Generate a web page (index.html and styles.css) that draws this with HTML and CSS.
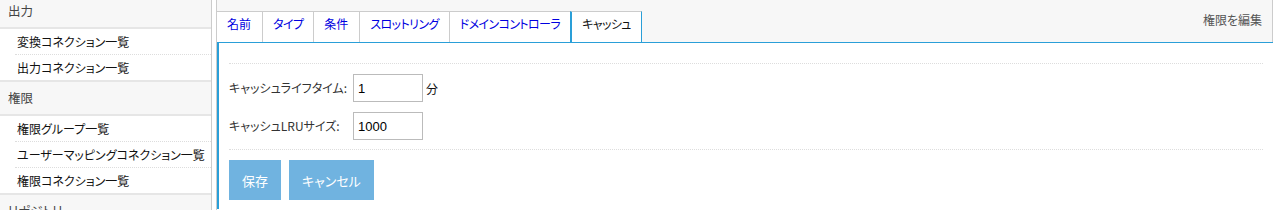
FILE: index.html
```html
<!DOCTYPE html>
<html lang="ja">
<head>
  <meta charset="UTF-8" />
  <title>権限コネクション - キャッシュ</title>
  <link rel="stylesheet" href="styles.css">
</head>
<body>

  <div class="layout">
    <!-- Navigation -->
    <nav class="sidebar">
      <div class="nav-group">
        <div class="nav-head">出力</div>
        <ul class="nav-list">
          <li>変換コネクション一覧</li>
          <li>出力コネクション一覧</li>
        </ul>
      </div>
      <div class="nav-group">
        <div class="nav-head">権限</div>
        <ul class="nav-list">
          <li>権限グループ一覧</li>
          <li>ユーザーマッピングコネクション一覧</li>
          <li>権限コネクション一覧</li>
        </ul>
      </div>
      <div class="nav-group">
        <div class="nav-head">リポジトリ</div>
      </div>
    </nav>

    <!-- Main -->
    <div class="main">
      <div class="tabbar">
        <ul class="tabs">
          <li class="tab"><a href="#">名前</a></li>
          <li class="tab"><a href="#">タイプ</a></li>
          <li class="tab"><a href="#">条件</a></li>
          <li class="tab"><a href="#">スロットリング</a></li>
          <li class="tab"><a href="#">ドメインコントローラ</a></li>
          <li class="tab active">キャッシュ</li>
        </ul>
        <span class="edit-link">権限を編集</span>
      </div>

      <div class="panel">
        <div class="form">
          <div class="row">
            <label class="label">キャッシュライフタイム:</label>
            <input class="field" type="text" value="1">
            <span class="unit">分</span>
          </div>
          <div class="row">
            <label class="label">キャッシュLRUサイズ:</label>
            <input class="field" type="text" value="1000">
          </div>
        </div>
        <div class="actions">
          <button class="btn">保存</button>
          <button class="btn">キャンセル</button>
        </div>
      </div>
    </div>
  </div>

</body>
</html>
```

FILE: styles.css
```css
body { margin: 0; font-family: "Noto Sans CJK JP", "Liberation Sans", sans-serif; font-size: 12px; font-feature-settings: "palt"; color: #222; overflow: hidden; }
.layout { display: flex; height: 210px; overflow: hidden; }

.sidebar { width: 211px; flex-shrink: 0; border-right: 1px solid #ccc; margin-top: -5px; }
.nav-group { border-bottom: 2px solid #e6e6e6; }
.nav-head { height: 32px; line-height: 32px; padding-left: 8px; background: #f7f7f7; color: #444; font-size: 12.5px; border-bottom: 2px solid #e6e6e6; }
.nav-list { list-style: none; margin: 0; padding: 0; background: #fff; }
.nav-list li { height: 25px; line-height: 25px; margin-left: 15px; padding-left: 2px; border-bottom: 1px dotted #ddd; color: #111; }
.nav-list li:last-child { border-bottom: none; }

.main { flex: 1; margin: 0 2px 0 4px; border-left: 1px solid #ccc; }
.tabbar { display: flex; align-items: flex-end; height: 42px; background: #f7f7f7; border-right: 1px solid #ccc; box-sizing: border-box; }
.tabs { display: flex; list-style: none; margin: 0; padding: 0; }
.tab { height: 31px; padding: 3px 10px 0 10px; box-sizing: border-box; background: #fff; border-top: 1px solid #ccc; border-right: 1px solid #ccc; line-height: 17px; letter-spacing: -0.6px; }
.tab:nth-child(1), .tab:nth-child(3) { letter-spacing: 0; padding: 3px 11px 0 10px; }
.tab a { color: #0000e0; text-decoration: none; }
.tab.active { border-left: 2px solid #2a9fd8; border-right: 1px solid #2a9fd8; margin-left: -1px; color: #111; }
.edit-link { align-self: flex-start; margin: 11px 10px 0 auto; color: #555; line-height: 17px; }

.panel { border-top: 1px solid #2a9fd8; border-left: 2px solid #2a9fd8; padding: 20px 10px 0 10px; height: 167px; box-sizing: border-box; }
.form { border-top: 1px dotted #ddd; border-bottom: 1px dotted #ddd; padding: 10px 0 9px 0; display: flex; flex-direction: column; gap: 10px; }
.row { display: flex; align-items: center; }
.label { width: 124px; color: #333; margin-top: -2px; }
.field { width: 70px; height: 28px; box-sizing: border-box; border: 1px solid #bbb; padding: 0 4px; font-family: "Liberation Sans", sans-serif; font-size: 13px; color: #000; margin: 0; }
.unit { margin-left: 3px; color: #111; }

.actions { display: flex; gap: 8px; margin-top: 10px; }
.btn { height: 40px; padding: 0 13px; border: none; background: #70b3e0; color: #fff; font-family: inherit; font-size: 13px; font-feature-settings: "palt"; cursor: pointer; }
```
